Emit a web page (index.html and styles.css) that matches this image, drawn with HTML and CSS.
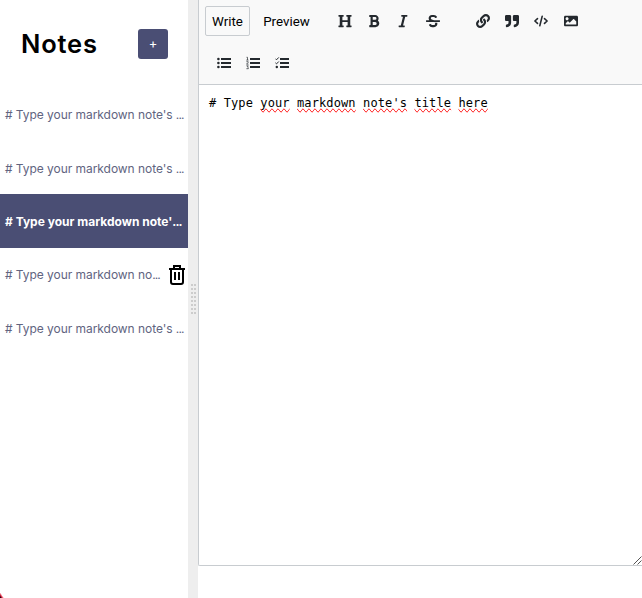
FILE: index.html
```html
<!DOCTYPE html>
<html lang="en">
<head>
<meta charset="utf-8">
<title>Notes</title>
<link rel="stylesheet" href="styles.css">
</head>
<body>
<main class="app">
  <aside class="sidebar">
    <header class="sidebar-header">
      <h1>Notes</h1>
      <button class="new-note">+</button>
    </header>
    <div class="note"><span class="title">#&nbsp;Type your markdown note's <span class="dots">...</span></span></div>
    <div class="note"><span class="title">#&nbsp;Type your markdown note's <span class="dots">...</span></span></div>
    <div class="note selected"><span class="title">#&nbsp;Type your markdown note'<span class="dots">...</span></span></div>
    <div class="note"><span class="title">#&nbsp;Type your markdown no<span class="dots">...</span></span>
      <svg class="trash" viewBox="0 0 16 20" fill="none" stroke="#000" stroke-width="2"><path d="M0 4h16M5 3V1h6v2M2 4v13q0 2 2 2h8q2 0 2-2V4M6 7v8M10 7v8"/></svg>
    </div>
    <div class="note"><span class="title">#&nbsp;Type your markdown note's <span class="dots">...</span></span></div>
    <i class="corner"></i>
  </aside>
  <div class="gutter"><i class="grip"></i></div>
  <section class="editor">
    <div class="toolbar">
      <div class="tools">
        <button class="tab active">Write</button>
        <button class="tab preview">Preview</button>
        <div class="group first">
          <span class="tool"><svg viewBox="0 0 512 512"><path d="M448 96v320h32a16 16 0 0 1 16 16v32a16 16 0 0 1-16 16H320a16 16 0 0 1-16-16v-32a16 16 0 0 1 16-16h32V288H160v128h32a16 16 0 0 1 16 16v32a16 16 0 0 1-16 16H32a16 16 0 0 1-16-16v-32a16 16 0 0 1 16-16h32V96H32a16 16 0 0 1-16-16V48a16 16 0 0 1 16-16h160a16 16 0 0 1 16 16v32a16 16 0 0 1-16 16h-32v128h192V96h-32a16 16 0 0 1-16-16V48a16 16 0 0 1 16-16h160a16 16 0 0 1 16 16v32a16 16 0 0 1-16 16z"/></svg></span>
          <span class="tool"><svg viewBox="0 0 384 512"><path d="M333.49 238a122 122 0 0 0 27-65.21C367.87 96.49 308 32 233.42 32H34a16 16 0 0 0-16 16v48a16 16 0 0 0 16 16h31.87v288H34a16 16 0 0 0-16 16v48a16 16 0 0 0 16 16h209.32c70.8 0 134.14-51.75 141-122.4 4.74-48.45-16.39-92.06-50.83-119.6zM145.66 112h87.76a48 48 0 0 1 0 96h-87.76zm87.76 288h-87.76V288h87.76a56 56 0 0 1 0 112z"/></svg></span>
          <span class="tool"><svg viewBox="0 0 320 512"><path d="M320 48v32a16 16 0 0 1-16 16h-62.76l-80 320H208a16 16 0 0 1 16 16v32a16 16 0 0 1-16 16H16a16 16 0 0 1-16-16v-32a16 16 0 0 1 16-16h62.76l80-320H112a16 16 0 0 1-16-16V48a16 16 0 0 1 16-16h192a16 16 0 0 1 16 16z"/></svg></span>
          <span class="tool"><svg viewBox="0 0 512 512"><path d="M496 224H293.9l-87.17-26.83A43.55 43.55 0 0 1 219.55 112h66.79A49.89 49.89 0 0 1 331 139.58a16 16 0 0 0 21.46 7.15l42.94-21.47a16 16 0 0 0 7.16-21.46l-.53-1A128 128 0 0 0 287.51 32h-68a123.68 123.68 0 0 0-123 135.64c2 20.89 10.1 39.83 21.78 56.36H16a16 16 0 0 0-16 16v32a16 16 0 0 0 16 16h480a16 16 0 0 0 16-16v-32a16 16 0 0 0-16-16zm-180.24 96A43 43 0 0 1 336 356.45 43.59 43.59 0 0 1 292.45 400h-66.79A49.89 49.89 0 0 1 181 372.42a16 16 0 0 0-21.46-7.15l-42.94 21.47a16 16 0 0 0-7.16 21.46l.53 1A128 128 0 0 0 224.49 480h68a123.68 123.68 0 0 0 123-135.64 114.25 114.25 0 0 0-5.34-24.36z"/></svg></span>
        </div>
        <div class="group">
          <span class="tool"><svg viewBox="0 0 512 512"><path d="M326.612 185.391c59.747 59.809 58.927 155.698.36 214.59-.11.12-.24.25-.36.37l-67.2 67.2c-59.27 59.27-155.699 59.262-214.96 0-59.27-59.26-59.27-155.7 0-214.96l37.106-37.106c9.84-9.84 26.786-3.3 27.294 10.606.648 17.722 3.826 35.527 9.69 52.721 1.986 5.822.567 12.262-3.783 16.612l-13.087 13.087c-28.026 28.026-28.905 73.66-1.155 101.96 28.024 28.579 74.086 28.749 102.325.51l67.2-67.19c28.191-28.191 28.073-73.757 0-101.83-3.701-3.694-7.429-6.564-10.341-8.569a16.037 16.037 0 0 1-6.947-12.606c-.396-10.567 3.348-21.456 11.698-29.806l21.054-21.055c5.521-5.521 14.182-6.199 20.584-1.731a152.482 152.482 0 0 1 20.522 17.197zM467.547 44.449c-59.261-59.262-155.69-59.27-214.96 0l-67.2 67.2c-.12.12-.25.25-.36.37-58.566 58.892-59.387 154.781.36 214.59a152.454 152.454 0 0 0 20.521 17.196c6.402 4.468 15.064 3.789 20.584-1.731l21.054-21.055c8.35-8.35 12.094-19.239 11.698-29.806a16.037 16.037 0 0 0-6.947-12.606c-2.912-2.005-6.64-4.875-10.341-8.569-28.073-28.073-28.191-73.639 0-101.83l67.2-67.19c28.239-28.239 74.3-28.069 102.325.51 27.75 28.3 26.872 73.934-1.155 101.96l-13.087 13.087c-4.35 4.35-5.769 10.79-3.783 16.612 5.864 17.194 9.042 34.999 9.69 52.721.509 13.906 17.454 20.446 27.294 10.606l37.106-37.106c59.271-59.259 59.271-155.699.001-214.959z"/></svg></span>
          <span class="tool"><svg viewBox="0 0 512 512"><path d="M464 32H336c-26.5 0-48 21.5-48 48v128c0 26.5 21.5 48 48 48h80v64c0 35.3-28.7 64-64 64h-8c-13.3 0-24 10.7-24 24v48c0 13.3 10.7 24 24 24h8c88.4 0 160-71.6 160-160V80c0-26.5-21.5-48-48-48zm-288 0H48C21.5 32 0 53.5 0 80v128c0 26.5 21.5 48 48 48h80v64c0 35.3-28.7 64-64 64h-8c-13.3 0-24 10.7-24 24v48c0 13.3 10.7 24 24 24h8c88.4 0 160-71.6 160-160V80c0-26.5-21.5-48-48-48z"/></svg></span>
          <span class="tool"><svg viewBox="0 0 640 512" fill="none" stroke="#24292e" stroke-width="70" stroke-linecap="round" stroke-linejoin="round"><path d="M160 145L40 256l120 111M480 145l120 111-120 111M375 40L265 472"/></svg></span>
          <span class="tool"><svg viewBox="0 0 512 512"><path d="M464 448H48c-26.51 0-48-21.49-48-48V112c0-26.51 21.49-48 48-48h416c26.51 0 48 21.49 48 48v288c0 26.51-21.49 48-48 48zM112 120c-30.928 0-56 25.072-56 56s25.072 56 56 56 56-25.072 56-56-25.072-56-56-56zM64 384h384V272l-87.515-87.515c-4.686-4.686-12.284-4.686-16.971 0L208 320l-55.515-55.515c-4.686-4.686-12.284-4.686-16.971 0L64 336v48z"/></svg></span>
        </div>
      </div>
      <div class="tools lists">
        <span class="tool"><svg viewBox="0 0 14 14"><path d="M4 2h10v2H4zM4 6h10v2H4zM4 10h10v2H4z"/><circle cx="1.4" cy="3" r="1.3"/><circle cx="1.4" cy="7" r="1.3"/><circle cx="1.4" cy="11" r="1.3"/></svg></span>
        <span class="tool"><svg viewBox="0 0 14 14"><path d="M4 2h10v2H4zM4 6h10v2H4zM4 10h10v2H4z"/><path d="M.5 1.3h1V4M.3 4.1h2.2M.4 5.7h1.8v.7L.5 8.2h2M.4 9.8h1.9L1.4 11l.9.6v1.1H.4" fill="none" stroke="#24292e" stroke-width=".7"/></svg></span>
        <span class="tool"><svg viewBox="0 0 14 14"><path d="M5 2h9v2H5zM5 6h9v2H5zM5 10h9v2H5z"/><path d="M.4 2.7l1.1 1.1L3.8 1.4M.4 6.8l1.1 1.1 2.3-2.4" fill="none" stroke="#24292e"/><circle cx="1.8" cy="11" r="1.2"/></svg></span>
      </div>
    </div>
    <div class="textarea"># Type <u>your</u> <u>markdown</u> <u>note's</u> <u>title</u> <u>here</u>
      <svg class="resize" viewBox="0 0 9 9" stroke="#555" fill="none"><path d="M.5 8.5l8-8M4.5 8.5l4-4"/></svg>
    </div>
  </section>
</main>
</body>
</html>
```
FILE: styles.css
```css
* { box-sizing: border-box; }
body { margin: 0; background: #fff; overflow: hidden; }
button { margin: 0; padding: 0; border: 0; background: none; }
.app { display: flex; height: 598px; width: 642px; }
.sidebar { width: 188px; flex: none; position: relative; font-family: Inter, sans-serif; }
.sidebar-header { height: 87.6px; display: flex; align-items: center; justify-content: space-between; padding: 0 20px 0 21px; }
h1 { margin: 0; font-size: 25.5px; font-weight: 600; letter-spacing: .8px; line-height: 30px; }
.new-note { width: 30px; height: 30px; padding-bottom: 2px; border-radius: 3px; background: #4a4e74; color: #fff; font: 13px Inter, sans-serif; }
.note { height: 53.33px; display: flex; align-items: center; justify-content: space-between; padding: 1px 3px 0 5px; color: #61647f; }
.title { font-size: 12px; white-space: nowrap; letter-spacing: -.05px; }
.dots { letter-spacing: -.9px; }
.selected { background: #4a4e74; color: #fff; }
.selected .title { font-weight: 700; letter-spacing: 0; }
.trash { width: 16px; height: 20px; }
.corner { position: absolute; left: 0; bottom: 0; width: 4px; height: 6px; background: linear-gradient(to top right, #200008 10%, #e32c49 30%, transparent 52%); }
.gutter { width: 10px; flex: none; background: #eee; display: flex; align-items: center; justify-content: center; }
.grip { width: 5px; height: 30px; background: linear-gradient(90deg, transparent 2px, #eee 2px 3px, transparent 3px), repeating-linear-gradient(#ccc 0 2px, #eee 2px 4px); }
.editor { width: 444px; height: 566px; flex: none; border: 1px solid #c8ccd0; border-width: 0 0 1px 1px; border-radius: 0 0 0 2px; display: flex; flex-direction: column; }
.toolbar { height: 85px; background: #f9f9f9; border-bottom: 1px solid #c8ccd0; }
.tools { height: 42px; display: flex; align-items: center; padding-left: 6px; }
.tab { height: 30px; font: 13.33px Roboto, sans-serif; color: #000; }
.active { width: 45px; border: 1px solid #c8ccd0; border-radius: 2px; }
.preview { width: 73px; }
.group { display: flex; margin-left: 20.3px; }
.group.first { margin-left: 7px; }
.tool { width: 29.4px; height: 30px; display: flex; align-items: center; justify-content: center; fill: #24292e; }
.tool svg { width: 14px; height: 14px; }
.lists { padding-left: 10px; }
.textarea { position: relative; flex: 1; padding: 10px; font: 12px/17px "DejaVu Sans Mono", monospace; letter-spacing: .11px; color: #000; }
.textarea u { text-decoration: none; }
.textarea u { text-decoration-line: spelling-error; }
.resize { position: absolute; right: 0; bottom: 0; width: 9px; height: 9px; }
```
